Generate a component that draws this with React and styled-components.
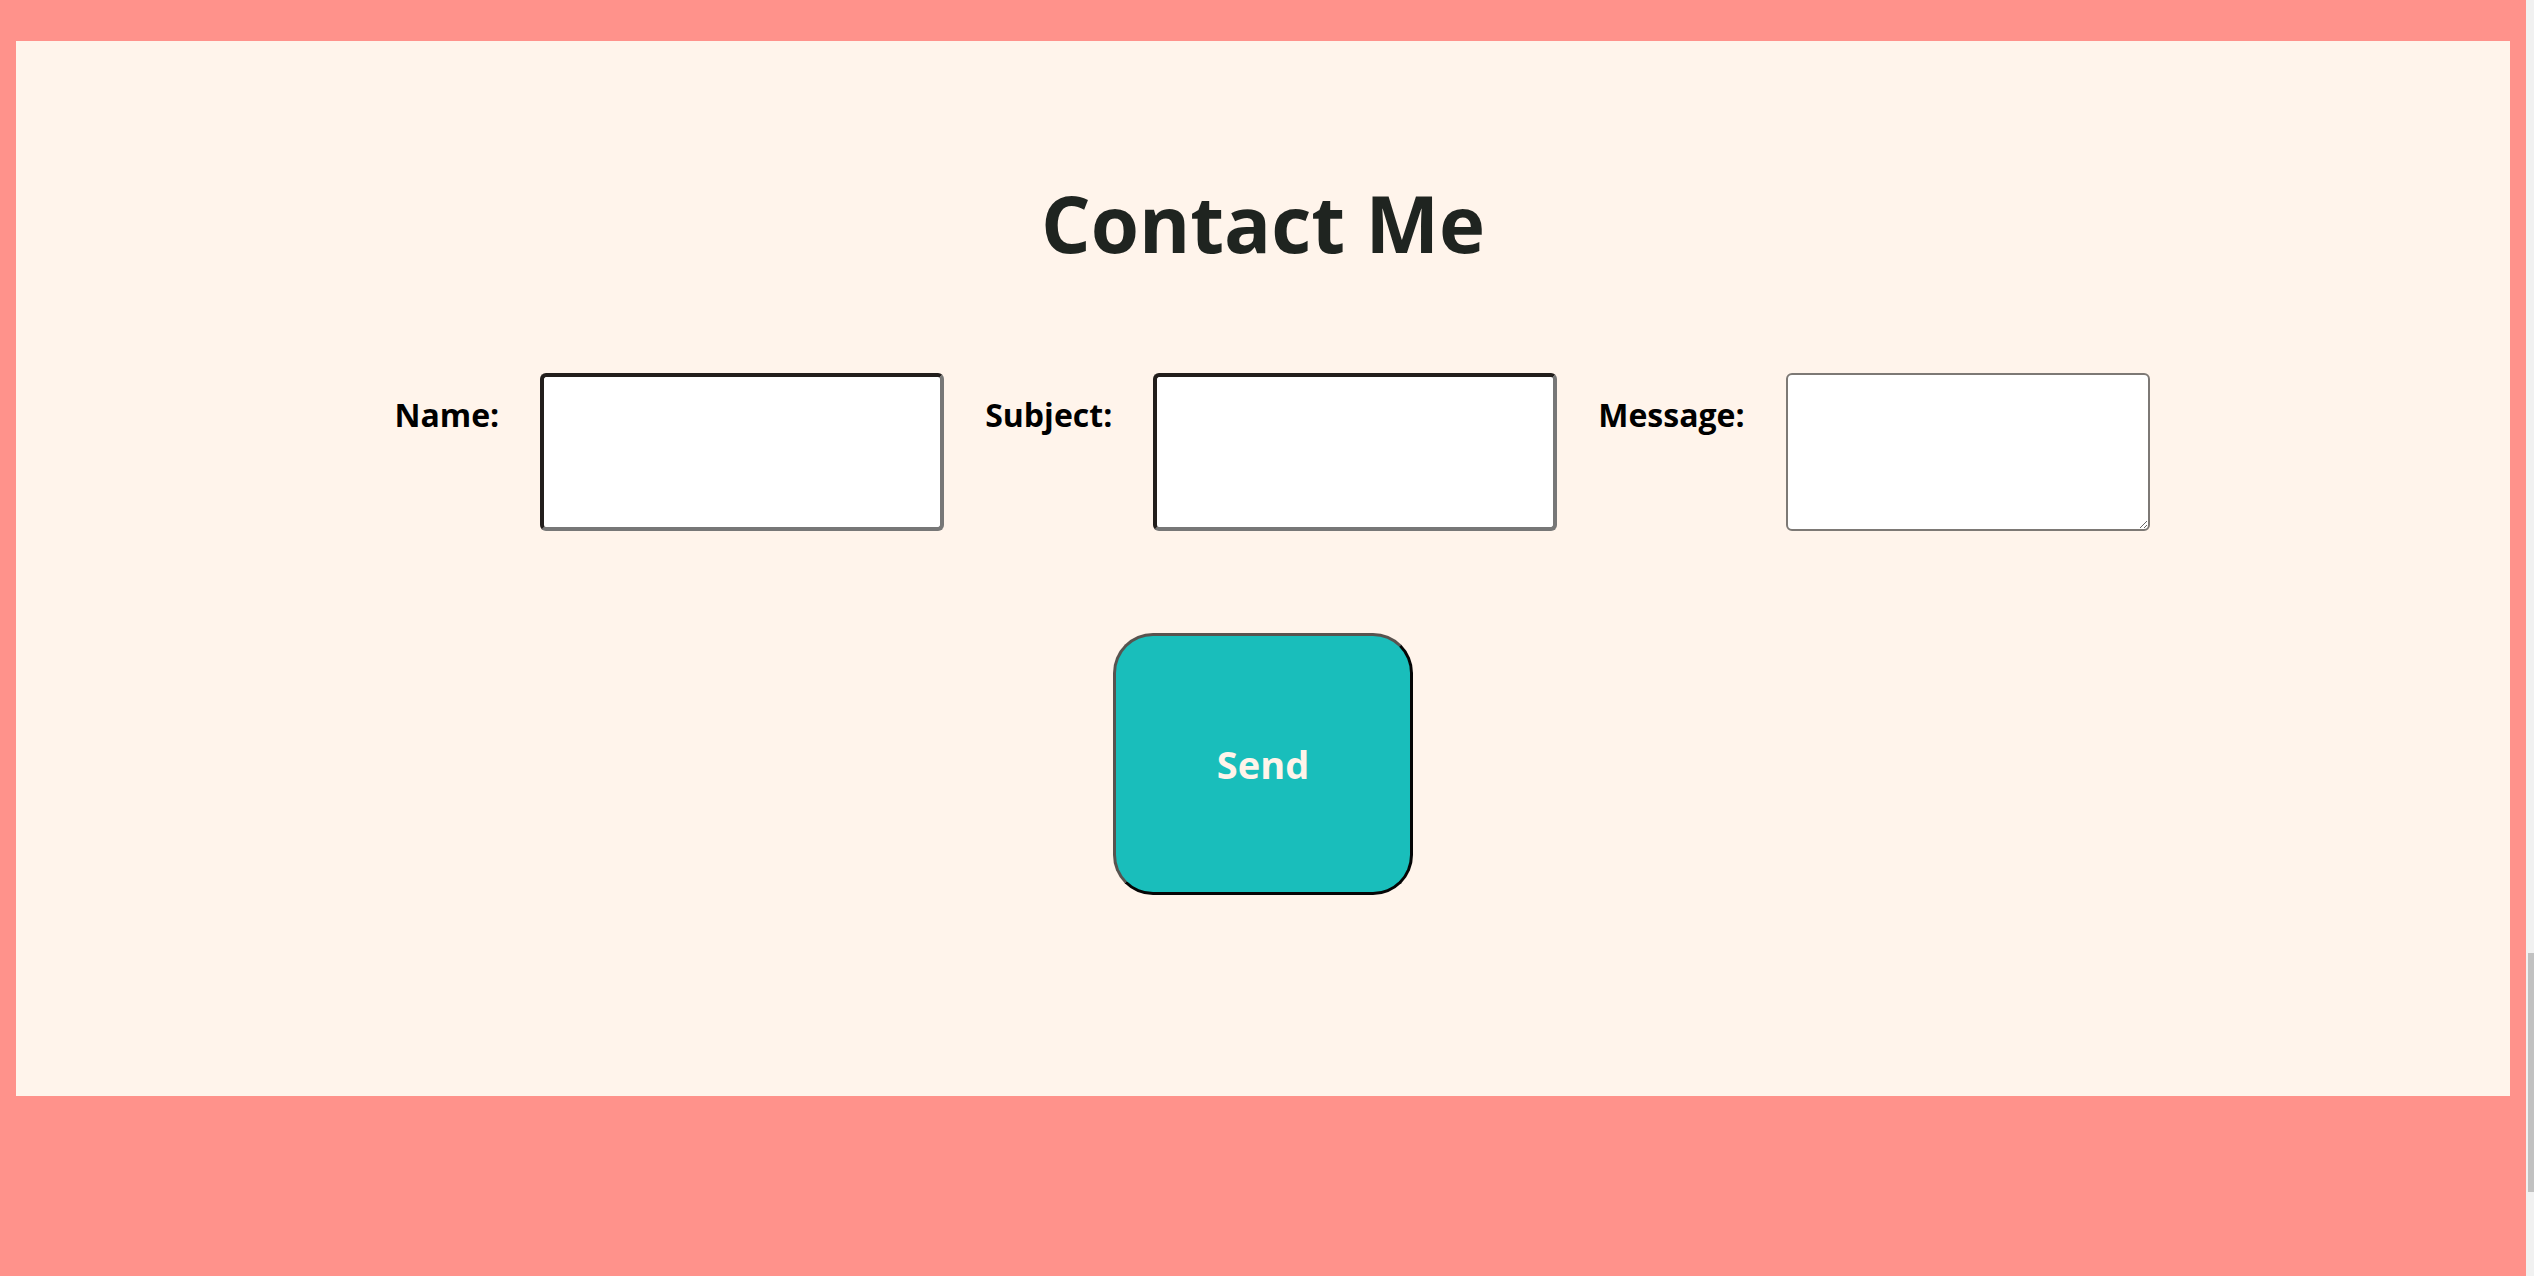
import React from 'react'
import styled, { createGlobalStyle } from 'styled-components'

const GlobalStyle = createGlobalStyle`
    html, body {
        margin: 0;
        padding: 0;
        background-color: #ff928b;
        font-family: "Comic Sans MS", "Open Sans", sans-serif;
    }
`

const Page = styled.div`
    min-height: 1276px;
    box-sizing: border-box;
    padding: 41px 24px 0 16px;
`

const Panel = styled.section`
    background-color: #fff4eb;
    height: 1055px;
    box-sizing: border-box;
    padding-top: 129px;
    display: flex;
    flex-direction: column;
    align-items: center;
`

const Title = styled.h1`
    margin: 0;
    font-size: 78px;
    font-weight: 700;
    color: #1f2420;
`

const Form = styled.form`
    display: flex;
    flex-direction: column;
    align-items: center;
    margin-top: 97px;
`

const Row = styled.div`
    display: flex;
    align-items: flex-start;
    justify-content: center;
    gap: 41px;
    padding-left: 18px;
`

const Label = styled.label`
    padding-top: 20px;
    font-size: 32px;
    font-weight: 700;
    color: #000;
`

const Field = styled.input`
    width: 404px;
    height: 158px;
    box-sizing: border-box;
    border: 4px solid;
    border-color: #221e1c #777 #777 #221e1c;
    border-radius: 6px;
    background: #fff;
    font: inherit;
    font-size: 24px;
    padding: 0 10px;
    outline: none;
`

const Message = styled.textarea`
    width: 364px;
    height: 158px;
    box-sizing: border-box;
    border: 2px solid #7d7975;
    border-radius: 6px;
    background: #fff;
    font: inherit;
    font-size: 20px;
    padding: 8px;
    outline: none;
`

const SendButton = styled.button`
    margin-top: 102px;
    width: 300px;
    height: 262px;
    box-sizing: border-box;
    border: 3px solid;
    border-color: #58534f #050505 #050505 #58534f;
    border-radius: 40px;
    background-color: #19bebb;
    color: #fff4ea;
    font-family: inherit;
    font-size: 38px;
    font-weight: 700;
    cursor: pointer;
`

const Scrollbar = styled.div`
    position: fixed;
    top: 0;
    right: 0;
    width: 8px;
    height: 100vh;
    background: #f1f1f1;
`

const Thumb = styled.div`
    position: absolute;
    top: 953px;
    left: 2px;
    width: 6px;
    height: 239px;
    background: #c1c1c1;
`

export default function App() {
    return (
        <>
            <GlobalStyle />
            <Page>
                <Panel>
                    <Title>Contact Me</Title>
                    <Form onSubmit={e => e.preventDefault()}>
                        <Row>
                            <Label htmlFor='name'>Name:</Label>
                            <Field id='name' type='text' />
                            <Label htmlFor='subject'>Subject:</Label>
                            <Field id='subject' type='text' />
                            <Label htmlFor='message'>Message:</Label>
                            <Message id='message' />
                        </Row>
                        <SendButton type='submit'>Send</SendButton>
                    </Form>
                </Panel>
            </Page>
            <Scrollbar>
                <Thumb />
            </Scrollbar>
        </>
    )
}
